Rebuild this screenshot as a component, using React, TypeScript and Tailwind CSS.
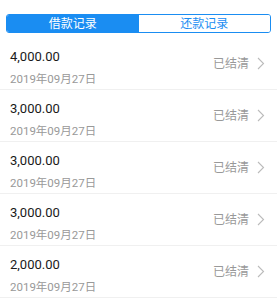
const records = [
  { amount: "4,000.00", date: "2019年09月27日" },
  { amount: "3,000.00", date: "2019年09月27日" },
  { amount: "3,000.00", date: "2019年09月27日" },
  { amount: "3,000.00", date: "2019年09月27日" },
  { amount: "2,000.00", date: "2019年09月27日" },
];

const App = () => {
  return (
    <div className="w-[277px] h-[300px] overflow-hidden bg-white font-['Roboto','Noto_Sans_CJK_SC',sans-serif]">
      <div className="px-[6px] pt-[14px] pb-[5px]">
        <div className="flex h-[19px] rounded-[3px] border border-[#1a8df2] overflow-hidden text-[12px]">
          <div className="flex-1 flex items-center justify-center bg-[#1a8df2] text-white">借款记录</div>
          <div className="flex-1 flex items-center justify-center bg-white text-[#1a8df2]">还款记录</div>
        </div>
      </div>

      {records.map((r, i) => (
        <div key={i} className="h-[52px] border-b border-[#f0f0f0] flex items-center pl-[10px] pr-[12px]">
          <div className="flex-1 flex flex-col pt-[8px]">
            <span className="text-[13px] leading-[18px] text-[#1a1a1a]">{r.amount}</span>
            <span className="text-[11.5px] leading-[16px] text-[#999] mt-[5px]">{r.date}</span>
          </div>
          <span className="text-[12px] text-[#999] mr-[8px]">已结清</span>
          <svg width="8" height="13" viewBox="0 0 8 13" fill="none">
            <path d="M1 1l5.5 5.5L1 12" stroke="#bbb" strokeWidth="1.1" />
          </svg>
        </div>
      ))}
    </div>
  );
};

export default App;
